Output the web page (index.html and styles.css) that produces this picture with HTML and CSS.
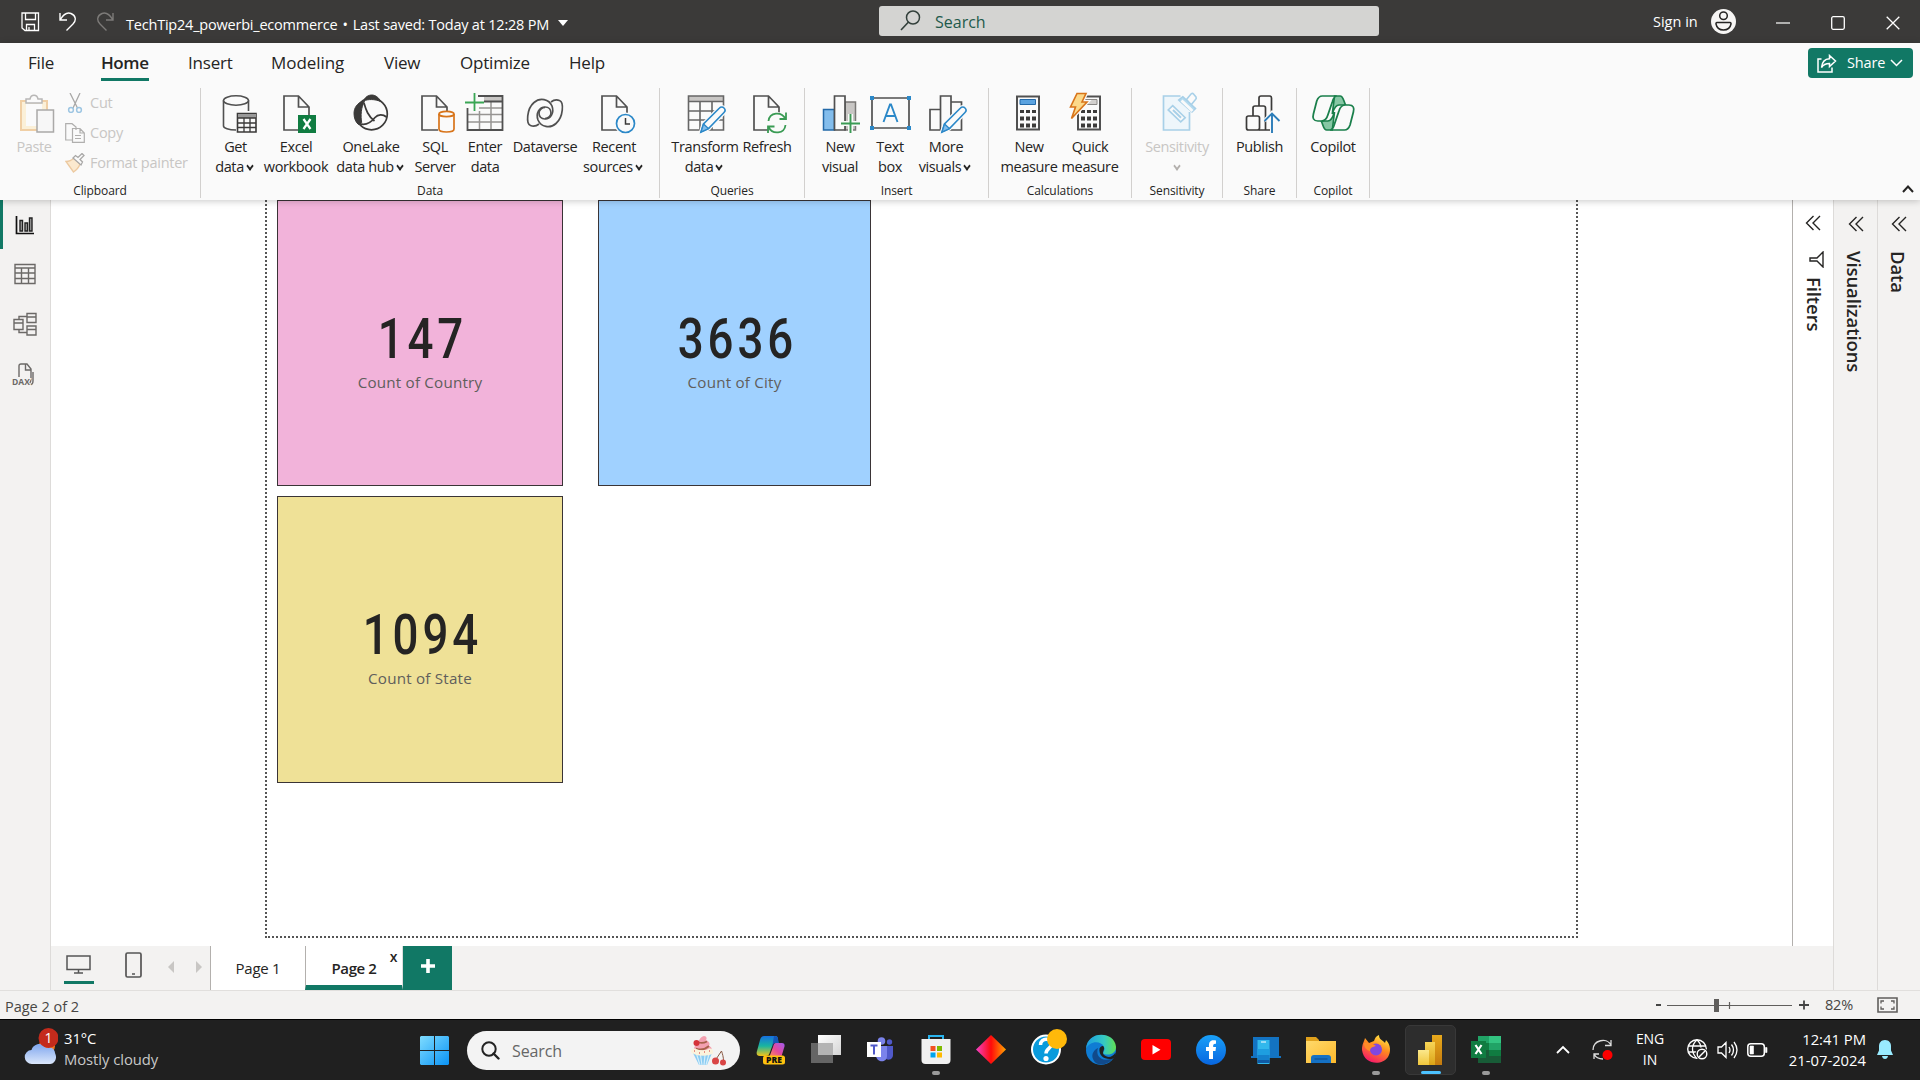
FILE: index.html
```html
<!DOCTYPE html>
<html lang="en">
<head>
<meta charset="utf-8">
<title>TechTip24_powerbi_ecommerce</title>
<link rel="stylesheet" href="styles.css">
</head>
<body>
<svg class="defs" width="0" height="0">
  <defs>
    <linearGradient id="win" x1="0" y1="0" x2="1" y2="1"><stop offset="0" stop-color="#7fdcff"/><stop offset="1" stop-color="#0a93f5"/></linearGradient>
    <linearGradient id="cloud" x1="0" y1="0" x2="0" y2="1"><stop offset="0" stop-color="#7fa6ee"/><stop offset="1" stop-color="#dbe7fb"/></linearGradient>
    <linearGradient id="cop1" x1="0" y1="0" x2="0" y2="1"><stop offset="0" stop-color="#1670e0"/><stop offset=".5" stop-color="#18b5a0"/><stop offset="1" stop-color="#f5c518"/></linearGradient>
    <linearGradient id="cop2" x1="0" y1="1" x2="1" y2="0"><stop offset="0" stop-color="#ff9a4d"/><stop offset=".5" stop-color="#e5489b"/><stop offset="1" stop-color="#a05cf0"/></linearGradient>
    <linearGradient id="dia" x1="0" y1="0" x2="1" y2="0"><stop offset="0" stop-color="#f542c8"/><stop offset=".5" stop-color="#ff0a0a"/><stop offset="1" stop-color="#ffa500"/></linearGradient>
    <linearGradient id="edge1" x1="0" y1="0" x2="1" y2="0"><stop offset="0" stop-color="#1b9de2"/><stop offset=".6" stop-color="#35c9c3"/><stop offset="1" stop-color="#62e052"/></linearGradient>
    <linearGradient id="fb" x1="0" y1="0" x2="0" y2="1"><stop offset="0" stop-color="#19a0f8"/><stop offset="1" stop-color="#0866e0"/></linearGradient>
    <linearGradient id="fold" x1="0" y1="0" x2="1" y2="1"><stop offset="0" stop-color="#ffd96b"/><stop offset="1" stop-color="#fdb92b"/></linearGradient>
    <linearGradient id="ff" x1=".8" y1="0" x2=".3" y2="1"><stop offset="0" stop-color="#fff04a"/><stop offset=".45" stop-color="#ff8a1e"/><stop offset="1" stop-color="#f5156c"/></linearGradient>
    <linearGradient id="pb1" x1="0" y1="0" x2="0" y2="1"><stop offset="0" stop-color="#e8a91c"/><stop offset="1" stop-color="#c47a0e"/></linearGradient>
    <linearGradient id="pb2" x1="0" y1="0" x2="0" y2="1"><stop offset="0" stop-color="#f7d557"/><stop offset="1" stop-color="#dba316"/></linearGradient>
    <linearGradient id="pb3" x1="0" y1="0" x2="0" y2="1"><stop offset="0" stop-color="#fbe88c"/><stop offset="1" stop-color="#f0c63c"/></linearGradient>
    <linearGradient id="tv" x1="0" y1="0" x2="1" y2="1"><stop offset="0" stop-color="#ffffff"/><stop offset="1" stop-color="#d4d4d4"/></linearGradient>
    <symbol id="pencil" viewBox="0 0 26 26" overflow="visible"><path d="M1 25.500l2.500-8L19.500 1.500a3 3 0 0 1 4.500 0c1.500 1.500 1.300 3.200 0 4.500L8.500 22z" fill="#fafafa" stroke="#fafafa" stroke-width="4"/><path d="M1 25.500l2.500-8L19.500 1.500a3 3 0 0 1 4.500 0c1.500 1.500 1.300 3.200 0 4.500L8.500 22z" fill="#fafafa" stroke="#2b88c8" stroke-width="1.600"/><path d="M1 25.500l2.500-8 5 4.500z" fill="#83bdec" stroke="#2b88c8" stroke-width="1.300"/></symbol>
    <symbol id="doc" viewBox="0 0 27 36" overflow="visible"><path d="M17 35H1V1h14.500l10.500 11v8M15.500 1v11H26" fill="#fafafa" stroke="#505050" stroke-width="1.700"/></symbol>
    <symbol id="calc" viewBox="0 0 24 35" overflow="visible"><path d="M1 1h22v33H1z" fill="#fafafa" stroke="#505050" stroke-width="2"/><path d="M4 14.500h4v3H4zm6 0h4v3h-4zm6 0h4v3h-4zM4 21h4v4H4zm6 0h4v4h-4zm6 0h4v4h-4zM4 28h4v4H4zm6 0h4v4h-4zm6 0h4v4h-4z" fill="#3b3a39"/></symbol>
    <symbol id="collapse" viewBox="0 0 16 16"><path d="M8.500 1L1.500 8l7 7M15 1L8 8l7 7" fill="none" stroke="#252423" stroke-width="1.400"/></symbol>
  </defs>
</svg>

<header class="titlebar">
  <svg class="tb-save" width="20" height="20" viewBox="0 0 20 20"><path d="M1 1h16.500v17.500H4L1 16zM4.500 1v6.500h10V1M5.500 18.500v-6h8v6M8 15v3" fill="none" stroke="#fff" stroke-width="1.300"/></svg>
  <svg class="tb-undo" width="18" height="19" viewBox="0 0 18 19"><path d="M1 1v7h7M1 8C4 3 8 0 12 1.500c5 2 5.500 7 2 10.500L7.500 18.500" fill="none" stroke="#fff" stroke-width="1.400"/></svg>
  <svg class="tb-redo" width="18" height="19" viewBox="0 0 18 19"><path d="M17 1v7h-7M17 8C14 3 10 0 6 1.500c-5 2-5.500 7-2 10.500l6.500 6.500" fill="none" stroke="#7d7b79" stroke-width="1.400"/></svg>
  <span class="tb-title">TechTip24_powerbi_ecommerce <b>•</b> Last saved: Today at 12:28 PM</span>
  <i class="tb-caret"></i>
  <div class="tb-search">
    <svg width="21" height="21" viewBox="0 0 21 21"><circle cx="13" cy="7.500" r="6.500" fill="none" stroke="#33403b" stroke-width="1.500"/><path d="M8.500 12L1 20" stroke="#33403b" stroke-width="1.600"/></svg>
    <span>Search</span>
  </div>
  <span class="tb-sign">Sign in</span>
  <svg class="tb-avatar" width="25" height="25" viewBox="0 0 25 25"><circle cx="12.500" cy="12.500" r="12.500" fill="#f6f5f4"/><circle cx="12.500" cy="6.700" r="3.800" fill="none" stroke="#252423" stroke-width="1.500"/><path d="M6 13.500h13a1.200 1.200 0 0 1 1 1.500c-.8 4-3.500 6-7.500 6s-6.700-2-7.500-6a1.200 1.200 0 0 1 1-1.500z" fill="none" stroke="#252423" stroke-width="1.500"/></svg>
  <div class="tb-win">
    <svg width="14" height="14" viewBox="0 0 14 14"><path d="M0 7h14" stroke="#fff" stroke-width="1.200"/></svg>
    <svg width="14" height="14" viewBox="0 0 14 14"><rect x=".7" y=".7" width="12.600" height="12.600" rx="1.500" fill="none" stroke="#fff" stroke-width="1.300"/></svg>
    <svg width="14" height="14" viewBox="0 0 14 14"><path d="M.7.7l12.600 12.600M13.300.7L.7 13.300" stroke="#fff" stroke-width="1.300"/></svg>
  </div>
</header>

<section class="ribbon">
  <nav class="menu">
    <span class="m-file">File</span><span class="m-home">Home</span><span class="m-insert">Insert</span><span class="m-model">Modeling</span><span class="m-view">View</span><span class="m-opt">Optimize</span><span class="m-help">Help</span>
    <div class="share">
      <svg width="20" height="19" viewBox="0 0 20 19"><path d="M4.500 5H1v13h14v-4.500" fill="none" stroke="#fff" stroke-width="1.500"/><path d="M12.500 1.500l6 5.500-6 5.500V9.500C8 9.500 6 11 4.500 13.500 5 8.500 8 5 12.500 4.800z" fill="none" stroke="#fff" stroke-width="1.500"/></svg>
      <span>Share</span>
      <svg width="13" height="8" viewBox="0 0 13 8"><path d="M1 1l5.500 5.500L12 1" fill="none" stroke="#fff" stroke-width="1.500"/></svg>
    </div>
  </nav>

  <div class="groups">
    <div class="group g-clip">
      <div class="tools">
        <div class="tool off w-paste">
          <svg viewBox="0 0 40 40"><path d="M7 7h26v29H7z" fill="#fbf0d8" stroke="#f0cfa5" stroke-width="2"/><path d="M12 10h16v22H12z" fill="#fafafa"/><path d="M12 9V5h4c1-5 7-5 8 0h4v4z" fill="#fafafa" stroke="#b8b7b6" stroke-width="1.500"/><path d="M23 16h16.500v22H23z" fill="#f7f7f7" stroke="#aaa9a8" stroke-width="1.500"/></svg>
          <span>Paste</span>
        </div>
        <div class="clip">
          <div><svg viewBox="0 0 20 20"><path d="M5 0l7.500 15M15 0L8 15" fill="none" stroke="#a9a8a7" stroke-width="1.300"/><circle cx="6" cy="17" r="2.400" fill="none" stroke="#9cc5e2" stroke-width="1.500"/><circle cx="14" cy="17" r="2.400" fill="none" stroke="#9cc5e2" stroke-width="1.500"/></svg><span>Cut</span></div>
          <div><svg viewBox="0 0 20 20"><path d="M7 17H.7V.7H7L11 4v3M7.500 5.500h7.500l4.300 4.500v9.300H7.500zM15 5.500V10h4.300M10 12.500h6M10 15.500h6" fill="none" stroke="#b0afae" stroke-width="1.200"/></svg><span>Copy</span></div>
          <div><svg viewBox="0 0 20 20"><path d="M1 8.500c4 0 6-1.500 8-3.500l6 6c-1 3-3.500 6-6.500 8z" fill="#fbe9cf" stroke="#ecc9a0" stroke-width="1.300"/><path d="M8 5l8 7 1.500-3-2.500-2.500 4-4-2-2-4 4-2.500-2z" fill="#fafafa" stroke="#a9a8a7" stroke-width="1.300"/></svg><span>Format painter</span></div>
        </div>
      </div>
      <div class="gname">Clipboard</div>
    </div>

    <div class="group g-data">
      <div class="tools">
        <div class="tool w53"><svg viewBox="0 0 40 40"><path d="M7.500 6.500v25.500c0 2 5 4 12.500 4M32.500 6.500V17" fill="none" stroke="#505050" stroke-width="1.600"/><ellipse cx="20" cy="6.500" rx="12.500" ry="4.700" fill="#fafafa" stroke="#505050" stroke-width="1.600"/><path d="M21.500 19.500h18.500v18.500H21.500z" fill="#fafafa" stroke="#3b3a39" stroke-width="1.600"/><path d="M22 20h18v4H22z" fill="#999"/><path d="M21.500 24h18.500M21.500 29h18.500M21.500 33.500h18.500M28 24v14M34 24v14" stroke="#3b3a39" stroke-width="1.300"/></svg><span>Get<br>data<b class="chev"></b></span></div>
        <div class="tool w68"><svg viewBox="0 0 40 40"><use href="#doc" x="7" y="1" width="27" height="36"/><path d="M22 21h18v18H22z" fill="#107c41"/><path d="M27.500 25l7 10m0-10l-7 10" stroke="#fff" stroke-width="2.200"/></svg><span>Excel<br>workbook</span></div>
        <div class="tool w82"><svg viewBox="0 0 40 40"><circle cx="20.500" cy="20" r="15.800" fill="#fafafa" stroke="#3b3a39" stroke-width="1.700"/><path d="M12.500 7C14 3 17.500 1 20.700 1s7 2 8.800 6.500C24 5 17 5 12.500 7z" fill="#3b3a39" stroke="#3b3a39"/><path d="M12.500 7C6 9 3 14 3 19.500c0 5 2 9 4.500 11l3.200-2C9.500 22 10 13 13.500 7.500z" fill="#3b3a39" stroke="#3b3a39"/><path d="M13 9c2 7 4 13 10.500 18M8 29.500c7 2.500 12-1 16-6 3-3.500 8-3.500 11.500-.5" fill="none" stroke="#3b3a39" stroke-width="1.700"/></svg><span>OneLake<br>data hub<b class="chev"></b></span></div>
        <div class="tool w46"><svg viewBox="0 0 40 40"><use href="#doc" x="6" y="1" width="27" height="36"/><path d="M24 20v15c0 4 15 4 15 0V20" fill="#fafafa" stroke="#d8741a" stroke-width="1.700"/><ellipse cx="31.500" cy="20" rx="7.500" ry="2.700" fill="#fafafa" stroke="#d8741a" stroke-width="1.700"/></svg><span>SQL<br>Server</span></div>
        <div class="tool w54"><svg viewBox="0 0 40 40"><path d="M19 2h18.500v5.500H19z" fill="#c8c6c4"/><path d="M14 14h23M3 20.500h34M3 28h34M14.500 17v19M26 8v28" fill="none" stroke="#979593" stroke-width="1.500"/><path d="M13 2h24.500v34H2.500V14M19 7.500h18.500" fill="none" stroke="#505050" stroke-width="1.800"/><path d="M0 8.500h19M9.500-1v18" stroke="#fafafa" stroke-width="5"/><path d="M0 8.500h19M9.500-1v18" stroke="#3aa655" stroke-width="1.800"/></svg><span>Enter<br>data</span></div>
        <div class="tool w66"><svg viewBox="0 0 40 40"><g fill="none" stroke="#505050" stroke-width="1.700"><path id="swirl" d="M14 30C11.500 32 8 32.500 5.500 31.500 1 30 1.500 15 9 8.500 15 3 24 5 27 12c2.500 7-1.500 13-7 13-4 0-6-3-6-6s3-5.500 6-5.500"/><use href="#swirl" transform="rotate(180 20 19)"/></g></svg><span>Dataverse</span></div>
        <div class="tool w72"><svg viewBox="0 0 40 40"><use href="#doc" x="7" y="1" width="27" height="36"/><circle cx="31.500" cy="29.500" r="11" fill="#fafafa"/><circle cx="31.500" cy="29.500" r="9" fill="#fafafa" stroke="#2b88c8" stroke-width="1.700"/><path d="M31.500 24v6h4.500" fill="none" stroke="#3b3a39" stroke-width="1.500"/></svg><span>Recent<br>sources<b class="chev"></b></span></div>
      </div>
      <div class="gname">Data</div>
    </div>

    <div class="group g-query">
      <div class="tools">
        <div class="tool w68"><svg viewBox="0 0 40 40"><path d="M3 2h36v5H3z" fill="#c8c6c4"/><path d="M3.500 2h35v34h-35zM3.500 7.500h35M3.500 17h35M3.500 26h35M15 7.500V36M27 7.500V36" fill="none" stroke="#666" stroke-width="1.600"/><use href="#pencil" x="15" y="12.500" width="26" height="26"/></svg><span>Transform<br>data<b class="chev"></b></span></div>
        <div class="tool w56"><svg viewBox="0 0 40 40"><use href="#doc" x="6" y="1" width="27" height="36"/><circle cx="30" cy="29" r="11" fill="#fafafa"/><path d="M21.500 27c1-9 13-10 17-2M38.500 31c-1 9-13 10-17 2M39 18.500V25h-6.500M21 39v-6.500h6.500" fill="none" stroke="#3a9b54" stroke-width="1.800"/></svg><span>Refresh</span></div>
      </div>
      <div class="gname">Queries</div>
    </div>

    <div class="group g-ins">
      <div class="tools">
        <div class="tool w46"><svg viewBox="0 0 40 40"><path d="M25 8h10.500v28H25z" fill="#c8c6c4" stroke="#797775" stroke-width="1.500"/><path d="M3.500 15.500h11V36h-11z" fill="#83bdec" stroke="#2369a8" stroke-width="1.500"/><path d="M14.500 2H25v34H14.500z" fill="#fafafa" stroke="#505050" stroke-width="1.700"/><path d="M21 29.500h19M30.500 20v19" stroke="#fafafa" stroke-width="5"/><path d="M21 29.500h19M30.500 20v19" stroke="#3a9b54" stroke-width="1.900"/></svg><span>New<br>visual</span></div>
        <div class="tool w54"><svg viewBox="0 0 40 40"><path d="M2 4h37v30H2z" fill="#fafafa" stroke="#505050" stroke-width="1.700"/><path d="M0 2h4v4H0zM37 2h4v4h-4zM0 32h4v4H0zM37 32h4v4h-4z" fill="#2b88c8"/><path d="M13.500 28L20 10.500h1L27.500 28M15.500 22h10" fill="none" stroke="#2b88c8" stroke-width="1.900"/></svg><span>Text<br>box</span></div>
        <div class="tool w58"><svg viewBox="0 0 40 40"><path d="M4 15.500h10.500V36H4zM25 8h10.500v28H25zM14.500 2H25v34H14.500z" fill="#fafafa" stroke="#505050" stroke-width="1.700"/><use href="#pencil" x="15" y="12.500" width="26" height="26"/></svg><span>More<br>visuals<b class="chev"></b></span></div>
      </div>
      <div class="gname">Insert</div>
    </div>

    <div class="group g-calc">
      <div class="tools">
        <div class="tool w58"><svg viewBox="0 0 40 40"><use href="#calc" x="7" y="1.500" width="24" height="35"/><path d="M11 5.500h15.500v5H11z" fill="#5ba3e0" stroke="#2369a8"/></svg><span>New<br>measure</span></div>
        <div class="tool w64"><svg viewBox="0 0 40 40"><use href="#calc" x="7" y="1.500" width="24" height="35"/><path d="M12 5.500h15v5H12z" fill="#d2d0ce" stroke="#8a8886"/><path d="M7-.5h9L12 8h5L1.500 24.500 5.500 13H.5z" fill="#fcd98a" stroke="#fafafa" stroke-width="4"/><path d="M7-.5h9L12 8h5L1.500 24.500 5.500 13H.5z" fill="#fcd98a" stroke="#d8741a" stroke-width="1.600"/></svg><span>Quick<br>measure</span></div>
      </div>
      <div class="gname">Calculations</div>
    </div>

    <div class="group g-sens">
      <div class="tools">
        <div class="tool off w70"><svg viewBox="0 0 40 40"><path d="M32.500 18v18h-26V2h17" fill="#eef6fb" stroke="#a8d0e8" stroke-width="1.700"/><path d="M15.700 11.700l12.500 12-4.500 4.200-12.500-12z" fill="#fafafa" stroke="#a8d0e8" stroke-width="1.600"/><path d="M16 16l8 7.700" stroke="#a8d0e8" stroke-width="2"/><path d="M29.500 5.500L34 0q1.500-1.200 2.500 0l2.500 3q.8 1.500-.5 2.500L34 11z" fill="#fafafa" stroke="#a8d0e8" stroke-width="1.600"/><path d="M25.700 2.700L38.500 14.500l-3.500 3.500L21.700 6z" fill="#b5dbef" stroke="#a8d0e8" stroke-width="1.600"/><path d="M23.500 7.500l11 10.500 2-2L25.500 5.500z" fill="#fafafa"/></svg><span>Sensitivity<br><b class="chev"></b></span></div>
      </div>
      <div class="gname">Sensitivity</div>
    </div>

    <div class="group g-share">
      <div class="tools">
        <div class="tool w60"><svg viewBox="0 0 40 40"><rect x="19" y="2" width="12.500" height="30" rx="2" fill="#fafafa" stroke="#3b3a39" stroke-width="1.700"/><rect x="13" y="12" width="12.500" height="22" rx="2" fill="#fafafa" stroke="#3b3a39" stroke-width="1.700"/><path d="M20 28h13v8H20z" fill="#fafafa"/><rect x="6.500" y="22" width="13" height="14" rx="2" fill="#fafafa" stroke="#3b3a39" stroke-width="1.700"/><path d="M19 36h12M25.500 24v12" fill="none" stroke="#3b3a39" stroke-width="1.700"/><path d="M32 39V18M24.500 27l7.500-8 7.500 8" fill="none" stroke="#fafafa" stroke-width="4"/><path d="M32 39V19.500M24.500 27l7.500-7.500 7.500 7.500" fill="none" stroke="#2b7cb8" stroke-width="1.900"/></svg><span>Publish</span></div>
      </div>
      <div class="gname">Share</div>
    </div>

    <div class="group g-cop">
      <div class="tools">
        <div class="tool w60"><svg viewBox="0 0 40 40"><g transform="translate(-1.800 0) scale(1.110 1)"><path d="M21 2h5c3 0 3 5 5 9h-6c-4 0-5 6-6 9zM19 36h-5c-3 0-3-5-5-9h6c4 0 5-6 6-9z" fill="#86c7a4" stroke="#1a7f4b" stroke-width="1.500"/><path d="M10 2h13c-2 0-3 2-4 6l-4 13c-1 4-3 6-6 6H6c-4 0-5-3-4-7L5 7c1-3 2-5 5-5zM30 36H17c2 0 3-2 4-6l4-13c1-4 3-6 6-6h3c4 0 5 3 4 7l-3 13c-1 3-2 5-5 5z" fill="#fafafa" stroke="#1a7f4b" stroke-width="1.600"/></g></svg><span>Copilot</span></div>
      </div>
      <div class="gname">Copilot</div>
    </div>
    <svg class="fold" width="12" height="8" viewBox="0 0 12 8"><path d="M1 7l5-5.500L11 7" fill="none" stroke="#252423" stroke-width="2"/></svg>
  </div>
</section>

<main class="work">
  <aside class="views">
    <div class="view on"><svg width="22" height="22" viewBox="0 0 22 22"><path d="M2.500 2v17.500H20" fill="none" stroke="#111" stroke-width="1.700"/><path d="M6 6.500h2.500V17H6zM11 9h2.500v8H11zM15.500 4H18v13h-2.500z" fill="#aaa" stroke="#222" stroke-width="1.400"/></svg></div>
    <div class="view"><svg width="22" height="22" viewBox="0 0 22 22"><path d="M1 1.500h20v19H1zM1 5h20M1 10h20M1 15.500h20M7.500 5v15.500M14.500 5v15.500" fill="none" stroke="#6b6967" stroke-width="1.400"/></svg></div>
    <div class="view"><svg width="24" height="24" viewBox="0 0 24 24"><path d="M1 7.500h9v10H1zM1 11h9M14 1.500h9v9h-9zM14 5h9M14 14h9v9h-9zM14 17.500h9M6 7.500V4.500h8M6 17.500v3h8" fill="none" stroke="#6b6967" stroke-width="1.400"/></svg></div>
    <div class="view daxview"><svg width="24" height="24" viewBox="0 0 24 24"><path d="M7 14V3q0-2 2-2h6l4 5v10q0 3-2 5M13.500 1.500V7H19M21 9v9q0 4-4 4" fill="none" stroke="#6b6967" stroke-width="1.400"/><text x="0" y="22" class="dax">DAX</text></svg></div>
  </aside>

  <div class="center">
    <div class="canvas-row">
      <div class="canvas">
        <div class="page">
          <div class="card pink"><strong>147</strong><span>Count of Country</span></div>
          <div class="card blue"><strong>3636</strong><span>Count of City</span></div>
          <div class="card yellow"><strong>1094</strong><span>Count of State</span></div>
        </div>
      </div>
      <aside class="filters">
        <svg class="coll" width="16" height="16"><use href="#collapse"/></svg>
        <svg class="funnel" width="15" height="17" viewBox="0 0 15 17"><path d="M14 1v15L8 10H1V7h7z" fill="none" stroke="#252423" stroke-width="1.400"/></svg>
        <span>Filters</span>
      </aside>
    </div>
    <div class="tabs">
      <div class="device on"><svg width="25" height="19" viewBox="0 0 25 19"><path d="M1 1h23v13.500H1zM12.500 14.500V18M8 18h9" fill="none" stroke="#555" stroke-width="1.500"/></svg></div>
      <div class="device phone"><svg width="17" height="26" viewBox="0 0 17 26"><rect x="1" y="1" width="15" height="24" rx="1.500" fill="none" stroke="#555" stroke-width="1.700"/><path d="M7 22h3" stroke="#555" stroke-width="1.500"/></svg></div>
      <i class="prev"></i><i class="next"></i>
      <div class="tab">Page 1</div>
      <div class="tab active">Page 2<em>x</em></div>
      <div class="add"><svg width="14" height="14" viewBox="0 0 14 14"><path d="M7 0v14M0 7h14" stroke="#fff" stroke-width="3.600"/></svg></div>
    </div>
  </div>
  <aside class="pane viz"><svg class="coll" width="16" height="16"><use href="#collapse"/></svg><span>Visualizations</span></aside>
  <aside class="pane data"><svg class="coll" width="16" height="16"><use href="#collapse"/></svg><span>Data</span></aside>
</main>

<footer class="status">
  <span class="count">Page 2 of 2</span>
  <div class="zoom">
    <svg width="154" height="16" viewBox="0 0 154 16"><path d="M1 8h5M144 8h10M149 3.500v9" stroke="#444" stroke-width="1.800"/><path d="M12 8.500h125M74.500 5v7" stroke="#605e5c" stroke-width="1.200"/><path d="M59 2h5v13h-5z" fill="#605e5c"/></svg>
    <span>82%</span>
    <svg width="21" height="16" viewBox="0 0 21 16"><path d="M1 1h19v14H1z" fill="none" stroke="#605e5c" stroke-width="1.600"/><path d="M4 6.500V4h3M14 4h3v2.500M17 9.500V12h-3M7 12H4V9.500" fill="none" stroke="#605e5c" stroke-width="1.300"/></svg>
  </div>
</footer>

<footer class="taskbar">
  <svg class="cloud" width="34" height="38" viewBox="0 0 34 38"><circle cx="23" cy="19" r="8" fill="#f3761c"/><path d="M8 37a7 7 0 0 1-.5-14C9 17 18 14 22 21c6-2 9 2 9 5 3 6-1 11-5 11z" fill="url(#cloud)"/><circle cx="24.500" cy="11" r="10" fill="#c42b1c"/><text x="24.500" y="16" class="badge">1</text></svg>
  <div class="weather"><span>31°C</span><span class="dim">Mostly cloudy</span></div>
  <svg class="start" width="29" height="29" viewBox="0 0 29 29"><path d="M1 0h13v14H0V1zM15 0h13l1 1v13H15zM0 15h14v14H1l-1-1zM15 15h14v13l-1 1H15z" fill="url(#win)"/></svg>
  <div class="tsearch">
    <svg width="19" height="19" viewBox="0 0 19 19"><circle cx="8" cy="8" r="6.700" fill="none" stroke="#222" stroke-width="2"/><path d="M12.500 12.500l5 5" stroke="#222" stroke-width="2.400" stroke-linecap="round"/></svg>
    <span>Search</span>
    <svg class="cake" width="36" height="30" viewBox="0 0 36 30"><path d="M2 17h19l-5 12H8z" fill="#8accf2"/><path d="M5.500 18L9 29M9.500 19l1.500 10M14 19l-1 10M18 18l-3 11" stroke="#d5eefb" stroke-width="1.200"/><path d="M3 13c0-3 2-4 4-4 0-4 2-8 6-9 3 0 3 3 2 4 4 2 4 4 3 6 3 1 3 3 2 5z" fill="#f3a0b0"/><path d="M5 12.500c5 2 9 1 13-2.500M8 6.500c3 1 5 .5 8-1" fill="none" stroke="#a8614a" stroke-width="1.800"/><path d="M0 15c1-2 3-3 5-2 4 2 10 2 13-.500 3 0 5 2 4 5-5 3-15 3-20 0-1 0-2-1-2-2.500z" fill="#fbf3dc"/><path d="M3 15h1M8 17h1M13 16h1M18 15h1" stroke="#e0706c" stroke-width="1.400"/><circle cx="5.500" cy="7" r="3" fill="#d5323a"/><path d="M24.500 24c2-3 4-6 6-9 1 3 2 6 2 10" fill="none" stroke="#8a5a45" stroke-width="1"/><circle cx="24.500" cy="25" r="3.500" fill="#d94545"/><circle cx="32" cy="26.500" r="3" fill="#d94545"/></svg>
  </div>
  <div class="apps">
    <div class="app"><svg viewBox="0 0 30 30"><path d="M8 1h11c3 0 3 2 3 4-3-1-4 1-5 4l-3 8c-1 3-2 4-5 4H4c-3 0-4-2-3-5L4 5c1-3 2-4 4-4z" fill="url(#cop1)"/><path d="M18 1c4 0 4 3 5 7h-3c-3 0-3 2-4 5z" fill="#1456b8"/><path d="M20 8h6c3 0 3 3 2 5l-3 10H13l4-11c1-3 1-4 3-4z" fill="url(#cop2)"/><rect x="7" y="20.500" width="22" height="9" rx="2.500" fill="#ffc20e"/><text x="18" y="28" class="pre">PRE</text></svg></div>
    <div class="app"><svg viewBox="0 0 30 30"><path d="M0 8h22v20H0z" fill="#656565"/><path d="M7 0h23v20H7z" fill="url(#tv)"/><path d="M7 8h15v12H7z" fill="#b4b4b4"/></svg></div>
    <div class="app"><svg viewBox="0 0 30 30"><circle cx="15.500" cy="6" r="3.800" fill="#7b83eb"/><circle cx="23.500" cy="7" r="2.700" fill="#5059c9"/><path d="M19 11h8v9c0 5-6 6-8 3z" fill="#5059c9"/><path d="M10 11h11v10c0 7-10 7-11 0z" fill="#7b83eb"/><path d="M1 7h14v15H1z" fill="#fff"/><path d="M4.500 10.500h7M8 10.500v9" stroke="#5059c9" stroke-width="2"/></svg></div>
    <div class="app run"><svg viewBox="0 0 30 30"><path d="M8 5V1h14v4" fill="none" stroke="#2ab5ef" stroke-width="2"/><path d="M.5 4h29v21q0 4-4 4h-21q-4 0-4-4z" fill="#f0f0f0"/><path d="M9.500 11h5v5h-5z" fill="#f25022"/><path d="M16 11h5v5h-5z" fill="#7fba00"/><path d="M9.500 17.500h5v5h-5z" fill="#00a4ef"/><path d="M16 17.500h5v5h-5z" fill="#ffb900"/></svg></div>
    <div class="app"><svg viewBox="0 0 30 30"><path d="M15 0l15 14.500L15 29 0 14.500z" fill="url(#dia)"/></svg></div>
    <div class="app"><svg viewBox="0 0 30 30"><circle cx="15" cy="14.500" r="14" fill="#0a9bdc" stroke="#fff" stroke-width="2"/><path d="M9.500 10c0-8 12-7 11-.5-.5 4-5.500 4-5.500 9" fill="none" stroke="#fff" stroke-width="3.500"/><circle cx="15" cy="23.500" r="2.600" fill="#fff"/><circle cx="26" cy="4" r="10" fill="#ffb90a"/></svg></div>
    <div class="app"><svg viewBox="0 0 30 30"><circle cx="15" cy="15" r="15" fill="#0f7cd4"/><path d="M0 14C1-5 29-4 30 12c0 6-6 9-12 7-3-1 2-3 0-7C15 5 3 6 0 14z" fill="url(#edge1)"/><path d="M12 13c-3 8 4 15 15 10-5 8-17 9-20 1-2-5 1-9 5-11z" fill="#114a8b"/><path d="M17.500 19.500c4 4 9 3 12-2 .5 3-.5 4-2 6-8 2-15-2-14-10 1-2 3-3 4-2 2 3-1.500 4 0 8z" fill="#202020"/></svg></div>
    <div class="app"><svg viewBox="0 0 30 30"><rect y="4" width="30" height="21" rx="4" fill="#f00"/><path d="M11.500 10v9.500l8-4.700z" fill="#fff"/></svg></div>
    <div class="app"><svg viewBox="0 0 30 30"><circle cx="15" cy="15" r="15" fill="url(#fb)"/><path d="M13 24v-8h-3v-4h3c-.4-5.500 1.500-7.500 7-6.500v3.300c-2.500-.2-3 .7-2.800 3.200H20l-.5 4H17v8z" fill="#fff"/></svg></div>
    <div class="app"><svg viewBox="0 0 30 30"><path d="M2 2h26v19h2v2H0v-2h2z" fill="#1373c2"/><path d="M6.500 5h12v24h-12z" fill="#32b8ec"/><path d="M6.500 14h12v6h-12z" fill="#1e9ee0"/><path d="M6.500 20h12v6h-12z" fill="#1480cc"/><path d="M6.500 25h12v3h-12z" fill="#0f5aa5"/><path d="M10 7h5" stroke="#fff"/></svg></div>
    <div class="app"><svg viewBox="0 0 30 30"><path d="M0 2h10l3 3v5H0z" fill="#e0a11c"/><path d="M0 6h30v22H0z" fill="url(#fold)"/><path d="M5 28v-5q0-3 3-3h14q3 0 3 3v5z" fill="#1571c4"/><path d="M8.500 24h13" stroke="#0c4b8a"/></svg></div>
    <div class="app run"><svg viewBox="0 0 30 30"><path d="M1 15C1 9 3 7 4 3l4 5 5-2c1-3 2-5 5-6 0 5 4 5 6 8l1-3c5 5 5 12 2 17C21 31 3 30 1 15z" fill="url(#ff)"/><circle cx="15" cy="14.500" r="6" fill="#8047e0"/><path d="M3 8c6-1 9 1 12 3-3 1-6 1-6 5-4-1-6-4-6-8z" fill="#ff8b27"/></svg></div>
    <div class="app sel"><svg viewBox="0 0 30 30"><path d="M16 0h10v30H16z" fill="url(#pb1)"/><path d="M9 7h10v23H9z" fill="url(#pb2)"/><path d="M2 15h11v15H2z" fill="url(#pb3)"/></svg></div>
    <div class="app run"><svg viewBox="0 0 30 30"><path d="M7 1h23v27H7z" fill="#21a366"/><path d="M18 1h12v7H18z" fill="#33c481"/><path d="M7 8h11v7H7z" fill="#107c41"/><path d="M18 15h12v6H18z" fill="#107c41"/><path d="M7 15h11v6H7zM7 21h23v7H7z" fill="#185c37"/><path d="M0 6h15v17H0z" fill="#107c41"/><path d="M4.500 10l6 9m0-9l-6 9" stroke="#fff" stroke-width="2.200"/></svg></div>
  </div>
  <div class="tray">
    <svg class="t-up" width="14" height="9" viewBox="0 0 14 9"><path d="M1 8l6-6 6 6" fill="none" stroke="#fff" stroke-width="1.800"/></svg>
    <svg class="t-sync" width="22" height="22" viewBox="0 0 22 22"><path d="M1 11C1 1 15-2 19 6M19 1v5.500h-6M2 20v-5h5M2 15c2 4 5 5 9 5" fill="none" stroke="#ddd" stroke-width="1.300"/><circle cx="15.500" cy="16" r="5" fill="#f00"/></svg>
    <div class="lang"><span>ENG</span><span>IN</span></div>
    <svg class="t-net" width="21" height="21" viewBox="0 0 21 21"><circle cx="10" cy="10" r="9.300" fill="none" stroke="#fff" stroke-width="1.400"/><path d="M1 7h18M1 13h12M10 .7C4 6 4 14 10 19.300M10 .7c3 3 4 5 4 8" fill="none" stroke="#fff" stroke-width="1.300"/><circle cx="15" cy="15" r="6.500" fill="#202020"/><circle cx="15" cy="15" r="4.800" fill="none" stroke="#fff" stroke-width="1.400"/><path d="M12 18l6-6" stroke="#fff" stroke-width="1.400"/></svg>
    <svg class="t-vol" width="21" height="18" viewBox="0 0 21 18"><path d="M1 6h3.500L9 1.500v15L4.500 12H1zM12 6q2 3 0 6M14.500 3.500q4 5.500 0 11M17 1q6 8 0 16" fill="none" stroke="#fff" stroke-width="1.300"/></svg>
    <svg class="t-bat" width="21" height="14" viewBox="0 0 21 14"><rect x=".8" y=".8" width="16.500" height="12.400" rx="3" fill="none" stroke="#fff" stroke-width="1.500"/><path d="M3 3h3.500v8H3zM18.500 4.500h1.500v5h-1.500z" fill="#fff" stroke="#fff" stroke-width=".6"/></svg>
    <div class="clock"><span>12:41 PM</span><span>21-07-2024</span></div>
    <svg class="t-bell" width="16" height="19" viewBox="0 0 16 19"><path d="M8 0c4 0 6 3 6 6v4.500l2 4.500H0l2-4.500V6c0-3 2-6 6-6zM5 16h6q-.5 3-3 3t-3-3z" fill="#99ebff"/></svg>
  </div>
</footer>
</body>
</html>
```
FILE: styles.css
```css
* { box-sizing: border-box; }
body {
  margin: 0;
  width: 1920px;
  height: 1080px;
  overflow: hidden;
  display: flex;
  flex-direction: column;
  font-family: "Open Sans", "Noto Sans", sans-serif;
  font-size: 14px;
  color: #252423;
  background: #fff;
}
svg { flex: none; display: block; }
span { white-space: nowrap; }
.defs { position: absolute; }

/* Title bar */
.titlebar {
  height: 43px;
  flex: none;
  display: flex;
  align-items: center;
  background: #3b3a39;
  color: #fff;
}
.tb-save { margin-left: 21px; }
.tb-undo { margin-left: 18px; }
.tb-redo { margin-left: 19px; }
.tb-title { margin: 5px 0 0 12px; width: 432px; font-size: 14.5px; letter-spacing: -.21px; }
.tb-title b { font-weight: 400; margin: 0 1.5px; }
.tb-caret { border: 5.500px solid transparent; border-top: 6px solid #fff; border-bottom: 0; margin-top: 2px; }
.tb-search {
  margin: 0 0 1px 311px;
  width: 500px;
  height: 30px;
  padding: 2px 21px 0;
  display: flex;
  align-items: center;
  gap: 14px;
  border-radius: 3px;
  background: #d4d4d2;
  color: #1e5a4b;
  font-size: 16px;
}
.tb-search svg { margin-top: -3px; }
.tb-sign { width: 47px; margin-left: 274px; letter-spacing: 0; font-size: 14.5px; }
.tb-avatar { margin-left: 11px; }
.tb-win { display: flex; gap: 41px; margin-left: 40px; padding-top: 3px; }

/* Ribbon */
.ribbon {
  height: 157px;
  flex: none;
  background: #fafafa;
  box-shadow: 0 1px 7px rgba(0, 0, 0, .22);
  position: relative;
  z-index: 2;
}
.menu { display: flex; height: 45px; font-size: 17px; line-height: 39px; letter-spacing: -.2px; }
.menu > span { height: 38px; }
.m-file { width: 73px; margin-left: 28px; }
.m-home { width: 48px; margin-right: 39px; border-bottom: 3px solid #117865; font-weight: 600; letter-spacing: -.4px; }
.m-insert { width: 83px; }
.m-model { width: 113px; }
.menu .m-model { letter-spacing: -.05px; }
.m-view { width: 76px; }
.m-opt { width: 109px; }
.m-help { width: 37px; }
.share {
  margin: 5px 7px 0 auto;
  width: 105px;
  height: 30px;
  padding-left: 9px;
  display: flex;
  align-items: center;
  border-radius: 4px;
  background: #117865;
  color: #fff;
  font-size: 14.500px;
  font-weight: 500;
  letter-spacing: -.15px;
}
.share span { width: 43px; margin: -1px 0 0 10px; }
.groups { display: flex; height: 112px; }
.group {
  display: flex;
  flex-direction: column;
  height: 110px;
  border-right: 1px solid #d2d0ce;
}
.tools { display: flex; flex: none; height: 94px; padding-top: 6px; }
.tool {
  flex: none;
  display: flex;
  flex-direction: column;
  align-items: center;
  gap: 3px;
  text-align: center;
  font-size: 14.500px;
  line-height: 20px;
  letter-spacing: -.38px;
}
.tool svg { width: 40px; height: 40px; overflow: visible; }
.tool > span { display: block; }
.chev {
  display: inline-block;
  width: 6px;
  height: 6px;
  margin: 0 3px 3px 3px;
  border: solid #252423;
  border-width: 0 2px 2px 0;
  transform: rotate(45deg) skew(8deg, 8deg);
}
.off, .clip { color: #c8c6c4; }
.off .chev { border-color: #b3b0ad; }
.gname { flex: none; height: 16px; text-align: center; font-size: 12px; line-height: 18px; letter-spacing: -.1px; }
.g-clip { width: 201px; }
.g-data { width: 459px; }
.g-data .tools { padding-left: 8px; }
.g-query { width: 145px; }
.g-query .tools { padding-left: 11px; }
.g-ins { width: 184px; }
.g-ins .tools { padding-left: 12px; }
.g-calc { width: 143px; }
.g-calc .tools { padding-left: 11px; }
.g-sens { width: 91px; }
.g-share { width: 74px; }
.g-cop { width: 73px; }
.g-sens .tools, .g-share .tools, .g-cop .tools { justify-content: center; }
.w-paste { width: 52px; margin-left: 8px; }
.w46 { width: 46px; }
.w53 { width: 53px; }
.w54 { width: 54px; }
.w56 { width: 56px; }
.w58 { width: 58px; }
.w60 { width: 60px; }
.w64 { width: 64px; }
.w66 { width: 66px; }
.w68 { width: 68px; }
.w70 { width: 70px; }
.w72 { width: 72px; }
.w82 { width: 82px; }
.clip { display: flex; flex-direction: column; gap: 10px; padding-left: 5px; margin-top: -1px; line-height: 20px; font-size: 14.500px; }
.clip div { display: flex; gap: 5px; letter-spacing: -.25px; }
.clip svg { width: 20px; height: 20px; }
.fold { align-self: flex-end; margin: 0 6px 7px auto; }

/* Work area */
.work { display: flex; height: 791px; flex: none; border-bottom: 1px solid #e1dfdd; background: #f3f2f1; }
.views { width: 51px; flex: none; border-right: 1px solid #dddbd9; }
.view { height: 50px; display: flex; align-items: center; justify-content: center; }
.view.on { border-left: 3px solid #117865; padding-right: 3px; height: 49px; }
.view.daxview { padding: 2px 2px 0 0; }
.dax { font-size: 8.500px; font-weight: 700; fill: #6b6967; stroke: #f3f2f1; stroke-width: 2px; paint-order: stroke; }
.center { width: 1782px; flex: none; display: flex; flex-direction: column; }
.canvas-row { display: flex; height: 746px; background: #fff; }
.canvas { width: 1741px; padding-left: 214px; }
.page {
  width: 1313px;
  height: 738px;
  border: dotted #555;
  border-width: 0 2px 2px;
  padding-left: 10px;
  display: grid;
  grid-template: 286px 287px / 286px 273px;
  column-gap: 35px;
  row-gap: 10px;
  align-content: start;
}
.card {
  border: 1px solid #3a3436;
  display: flex;
  flex-direction: column;
  align-items: center;
}
.pink { background: #f2b3da; }
.blue { background: #a0d1ff; }
.yellow { background: #efe197; }
.card strong {
  margin-top: 106px;
  height: 64px;
  padding-left: 6px;
  font: 500 55px/64px Roboto, sans-serif;
  letter-spacing: 4.700px;
  transform: scaleX(.83);
}
.card span { font-size: 15.200px; line-height: 22px; letter-spacing: .2px; color: #605e5c; }
.filters { width: 41px; border-left: 1px solid #b3b0ad; display: flex; flex-direction: column; }
.filters .coll { margin: 15px 0 0 12px; }
.funnel { margin: 20px 0 0 16px; }
.filters span, .pane span {
  width: 22px;
  writing-mode: vertical-rl;
  font-size: 18.500px;
  font-weight: 600;
  line-height: 22px;
  letter-spacing: -.1px;
}
.filters span { margin: 9px 0 0 10px; }
.pane { border-left: 1px solid #dddbd9; display: flex; flex-direction: column; }
.pane .coll { margin: 16px 0 0 14px; }
.pane span { margin: 19px 0 0 9px; }
.viz { width: 44px; }
.data { width: 43px; }
.pane.data .coll { margin-left: 13px; }

/* Page tabs */
.tabs { display: flex; height: 44px; font-size: 15px; }
.device { width: 30px; height: 38px; margin-left: 13px; display: flex; justify-content: center; align-items: flex-start; padding-top: 9px; }
.device.on { border-bottom: 3px solid #117865; padding-right: 2px; }
.phone { padding-top: 6px; margin-left: 24px; }
.prev, .next { margin-top: 15px; border: 6px solid transparent; height: 0; }
.prev { margin-left: 20px; border-left: 0; border-right-color: #c8c6c4; }
.next { margin-left: 22px; border-right: 0; border-left-color: #c8c6c4; margin-right: 8px; }
.tab {
  width: 95px;
  height: 44px;
  line-height: 44px;
  text-align: center;
  background: #fff;
  border-left: 1px solid #b3b0ad;
  letter-spacing: -.25px;
}
.tab.active { position: relative; width: 98px; border-right: 1px solid #ddd; border-bottom: 5px solid #117865; font-weight: 600; letter-spacing: -.4px; }
.tab em { position: absolute; right: 5px; top: 1px; font: 600 14px/20px "Open Sans", sans-serif; }
.add { width: 49px; background: #117865; display: flex; justify-content: center; padding-top: 13px; }

/* Status bar */
.status { display: flex; height: 28px; flex: none; justify-content: space-between; align-items: center; background: #f3f2f1; color: #484644; }
.count { margin: 3px 0 0 5px; font-size: 14.500px; letter-spacing: -.02px; }
.zoom { display: flex; align-items: center; margin-right: 22px; }
.zoom span { width: 68px; margin-top: -1px; padding-left: 16px; font-size: 14.500px; letter-spacing: -.2px; }

/* Taskbar */
.taskbar {
  display: flex;
  height: 61px;
  flex: none;
  background: #202020;
  border-top: 1px solid #000;
  color: #fff;
  font-size: 14px;
}
.cloud { margin: 7px 0 0 24px; }
.badge { font-size: 14px; fill: #fff; text-anchor: middle; }
.weather { width: 356px; margin: 8px 0 0 6px; display: flex; flex-direction: column; font-size: 14.800px; line-height: 20.500px; letter-spacing: -.05px; }
.dim { color: #c8c8c8; }
.start { margin-top: 16px; }
.tsearch {
  width: 273px;
  height: 39px;
  margin: 11px 0 0 18px;
  padding: 0 13px 0 14px;
  display: flex;
  align-items: center;
  border-radius: 20px;
  background: #f3f3f3;
  color: #666;
  font-size: 16px;
}
.tsearch span { margin-left: 12px; letter-spacing: -.1px; }
.cake { margin-left: auto; }
.apps { display: flex; margin-left: 3px; }
.app { width: 55px; height: 60px; padding-top: 15px; display: flex; flex-direction: column; align-items: center; gap: 6px; }
.app svg { width: 30px; height: 30px; overflow: visible; }
.pre { font-size: 8.500px; font-weight: 800; text-anchor: middle; fill: #111; }
.app.run::after { content: ""; width: 8px; height: 4px; border-radius: 2px; background: #9a9a9a; }
.app.sel { width: 51px; height: 50px; margin: 5px 2px; padding-top: 9px; background: #2d2d2d; border: 1px solid #383838; border-radius: 5px; }
.app.sel::after { content: ""; width: 20px; height: 4px; border-radius: 2px; background: #4cc2ff; }
.tray { display: flex; align-items: center; flex: 1; height: 59px; line-height: 20.500px; }
.t-up { margin-left: 43px; }
.t-sync { margin-left: 22px; }
.lang { width: 34px; margin-left: 19px; display: flex; flex-direction: column; align-items: center; letter-spacing: -.1px; }
.t-net { margin-left: 20px; }
.t-vol { margin-left: 9px; }
.t-bat { margin-left: 9px; }
.clock { flex: 1; display: flex; flex-direction: column; align-items: flex-end; font-size: 14.800px; letter-spacing: 0; }
.t-bell { margin: 0 27px 0 11px; }
```
